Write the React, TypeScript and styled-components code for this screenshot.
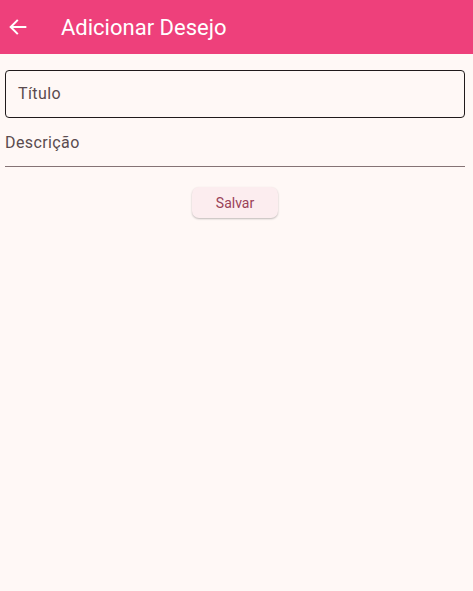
import React from 'react';
import styled, { createGlobalStyle } from 'styled-components';

const GlobalStyle = createGlobalStyle`
  html, body {
    margin: 0;
    padding: 0;
    background: #fff8f6;
    font-family: Roboto, "Liberation Sans", sans-serif;
  }
`;

const Page = styled.div`
  width: 473px;
  height: 591px;
  background: #fff8f6;
  display: flex;
  flex-direction: column;
`;

const AppBar = styled.header`
  height: 54px;
  background: #ee407b;
  display: flex;
  align-items: center;
  padding: 0 0 0 6px;
  gap: 31px;
  flex-shrink: 0;
`;

const BackButton = styled.button`
  width: 24px;
  height: 24px;
  padding: 0;
  border: none;
  background: transparent;
  display: flex;
  align-items: center;
  justify-content: center;
  color: #fff;
`;

const Title = styled.h1`
  margin: 0;
  font-size: 22px;
  font-weight: 400;
  color: #fff;
  letter-spacing: 0;
`;

const Form = styled.div`
  display: flex;
  flex-direction: column;
  padding: 16px 8px 0 5px;
`;

const OutlinedField = styled.div`
  height: 48px;
  border: 1.3px solid #201a1b;
  border-radius: 4px;
  box-sizing: border-box;
  display: flex;
  align-items: center;
  padding: 0 12px 2px;
`;

const UnderlineField = styled.div`
  height: 48px;
  border-bottom: 1px solid #857375;
  box-sizing: border-box;
  display: flex;
  align-items: center;
  margin-top: 1px;
`;

const Label = styled.span`
  font-size: 16px;
  color: #5a4b4e;
  letter-spacing: 0.4px;
`;

const ButtonRow = styled.div`
  display: flex;
  justify-content: center;
  padding-top: 20px;
  padding-left: 0;
`;

const SaveButton = styled.button`
  width: 86px;
  height: 31px;
  border: none;
  border-radius: 7px;
  background: #fcedef;
  color: #9a4258;
  font-family: Roboto, "Liberation Sans", sans-serif;
  font-size: 14px;
  box-shadow: 0 1px 2px rgba(0, 0, 0, 0.25);
`;

export default function App() {
  return (
    <Page>
      <GlobalStyle />
      <AppBar>
        <BackButton aria-label="Voltar">
          <svg width="22" height="22" viewBox="0 0 24 24" fill="none" stroke="#fff" strokeWidth="2.2" strokeLinecap="square">
            <path d="M20 12H5" />
            <path d="M11 5l-7 7 7 7" />
          </svg>
        </BackButton>
        <Title>Adicionar Desejo</Title>
      </AppBar>
      <Form>
        <OutlinedField>
          <Label>Título</Label>
        </OutlinedField>
        <UnderlineField>
          <Label>Descrição</Label>
        </UnderlineField>
        <ButtonRow>
          <SaveButton>Salvar</SaveButton>
        </ButtonRow>
      </Form>
    </Page>
  );
}
